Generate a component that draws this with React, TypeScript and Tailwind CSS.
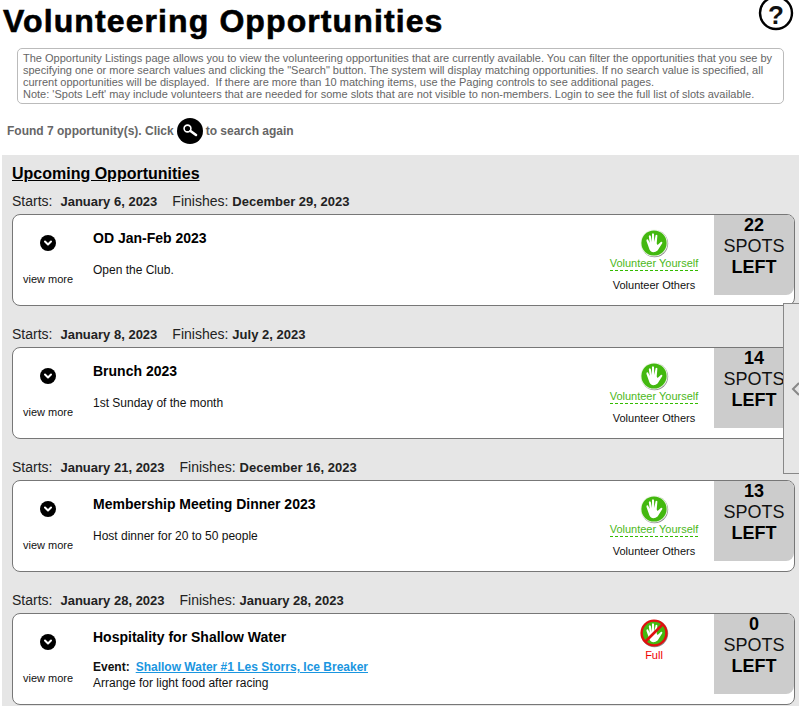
import { ChevronDown } from "lucide-react";

type Opportunity = {
  title: string;
  starts: string;
  finishes: string;
  description: string;
  spots: number;
  event?: string;
};

const OPPORTUNITIES: Opportunity[] = [
  { title: "OD Jan-Feb 2023", starts: "January 6, 2023", finishes: "December 29, 2023", description: "Open the Club.", spots: 22 },
  { title: "Brunch 2023", starts: "January 8, 2023", finishes: "July 2, 2023", description: "1st Sunday of the month", spots: 14 },
  { title: "Membership Meeting Dinner 2023", starts: "January 21, 2023", finishes: "December 16, 2023", description: "Host dinner for 20 to 50 people", spots: 13 },
  {
    title: "Hospitality for Shallow Water",
    starts: "January 28, 2023",
    finishes: "January 28, 2023",
    description: "Arrange for light food after racing",
    spots: 0,
    event: "Shallow Water #1 Les Storrs, Ice Breaker",
  },
];

function HandIcon({ full }: { full?: boolean }) {
  return (
    <svg width="30" height="30" viewBox="0 0 30 30" className="block">
      <circle cx="15.6" cy="15.6" r="13.6" fill="#8f8f8f" />
      <circle cx="15" cy="15" r="13.6" fill={full ? "#e01010" : "#eef7e8"} />
      <circle cx="15" cy="15" r={full ? 11.2 : 12.6} fill="#43b80f" />
      <path
        d="M10.5 21.5 L7.4 12.8 Q7.6 10.8 9 11.6 L10.8 15 L9.8 8.2 Q10.6 6.6 11.8 8 L12.9 14 L13 6 Q13.9 4.6 15 6 L15.3 14 L16.6 7.2 Q17.6 6 18.4 7.4 L17.7 15.4 L18.6 17 L21.8 14 Q23.8 13.4 23.2 15.2 L18.6 22.6 Q16 24.6 13 24 Q11.2 23.4 10.5 21.5 Z"
        fill="#fff"
      />
      {full && <path d="M6.5 23.5 L23.5 6.5" stroke="#e01010" strokeWidth="2.6" />}
    </svg>
  );
}

function SearchIcon() {
  return (
    <span className="flex size-[26px] shrink-0 items-center justify-center rounded-full bg-black">
      <svg width="18" height="18" viewBox="0 0 18 18" fill="none" stroke="#fff">
        <circle cx="6.5" cy="6.5" r="3.4" strokeWidth="1.6" />
        <path d="M9.5 9 L15 13" strokeWidth="2.6" strokeLinecap="round" />
      </svg>
    </span>
  );
}

function OpportunityCard({ item }: { item: Opportunity }) {
  return (
    <section className="mb-[14px]">
      <div className="flex h-[27px] items-center pt-[2px] text-[14px] text-[#222]">
        <span>Starts:</span>
        <b className="ml-[8px] text-[13px] font-bold">{item.starts}</b>
        <span className="ml-[15px]">Finishes:</span>
        <b className="ml-[4px] text-[13px] font-bold">{item.finishes}</b>
      </div>
      <div className="flex h-[92px] overflow-hidden rounded-[8px] border border-[#777] bg-white">
        <div className="flex w-[70px] shrink-0 flex-col items-center pt-[20px]">
          <span className="flex size-[16px] items-center justify-center rounded-full bg-black">
            <ChevronDown size={12} color="#fff" strokeWidth={4} />
          </span>
          <span className="mt-[22px] text-[11px] leading-[13px] text-[#111]">view more</span>
        </div>
        <div className="min-w-0 flex-1 pl-[10px] pt-[14px]">
          <h3 className="text-[14px] leading-[18px] font-bold text-black">{item.title}</h3>
          {item.event ? (
            <div className="mt-[13px] text-[12px] leading-[16px] text-[#111]">
              <div>
                <b className="font-bold">Event:</b>
                <a className="ml-[6px] font-bold text-[#1a96e0] underline">{item.event}</a>
              </div>
              <div>{item.description}</div>
            </div>
          ) : (
            <p className="mt-[15px] text-[12px] leading-[16px] text-[#111]">{item.description}</p>
          )}
        </div>
        {item.spots === 0 ? (
          <div className="flex w-[120px] shrink-0 flex-col items-center pt-[4px]">
            <HandIcon full />
            <span className="mt-[1px] text-[11px] leading-[12px] text-[#f00000]">Full</span>
          </div>
        ) : (
          <div className="flex w-[120px] shrink-0 flex-col items-center pt-[13px]">
            <HandIcon />
            <span className="-mt-[1px] border-b border-dashed border-[#33bb00] text-[11px] leading-[13px] text-[#4cb81a]">
              Volunteer Yourself
            </span>
            <span className="mt-[8px] text-[11px] leading-[13px] text-[#111]">Volunteer Others</span>
          </div>
        )}
        <div className="h-[80px] w-[80px] shrink-0 rounded-br-[8px] bg-[#cccccc] text-center text-[18px] leading-[21px] text-[#111]">
          <div className="font-bold text-black">{item.spots}</div>
          <div>SPOTS</div>
          <div className="font-bold text-black">LEFT</div>
        </div>
      </div>
    </section>
  );
}

export default function App() {
  return (
    <div className="relative h-[706px] w-[799px] overflow-hidden bg-white font-['Liberation_Sans',Arial,sans-serif]">
      <header className="flex h-[48px] items-start justify-between pl-[3px] pr-[5px]">
        <h1 className="text-[32px] leading-[43px] font-bold tracking-[1.1px] text-black [-webkit-text-stroke:0.6px_black]">
          Volunteering Opportunities
        </h1>
        <svg width="36" height="36" viewBox="0 0 36 36" fill="none" className="-mt-[5px]">
          <circle cx="18" cy="18" r="16" stroke="#000" strokeWidth="2.4" />
          <text x="18" y="29" textAnchor="middle" fontSize="26" fontWeight="700" fill="#111" fontFamily="Liberation Sans, Arial, sans-serif">
            ?
          </text>
        </svg>
      </header>

      <div className="mx-[17px] h-[56px] w-[767px] rounded-[5px] border border-[#bbb] px-[5px] py-[3px] text-[11px] leading-[12px] text-[#666]">
        The Opportunity Listings page allows you to view the volunteering opportunities that are currently available. You can filter the opportunities that you see by specifying one or more search values and clicking the "Search" button. The system will display matching opportunities. If no search value is specified, all current opportunities will be displayed.&nbsp; If there are more than 10 matching items, use the Paging controls to see additional pages.
        <br />
        Note: 'Spots Left' may include volunteers that are needed for some slots that are not visible to non-members. Login to see the full list of slots available.
      </div>

      <div className="flex h-[51px] items-center gap-[3px] pl-[7px] pt-[2px] text-[12px] font-bold text-[#666]">
        <span>Found 7 opportunity(s). Click</span>
        <SearchIcon />
        <span>to search again</span>
      </div>

      <main className="ml-[2px] h-[600px] bg-[#e6e6e6] pl-[10px] pr-[4px] pt-[9px]">
        <h2 className="text-[16px] leading-[20px] font-bold text-black underline">Upcoming Opportunities</h2>
        <div className="pt-[3px]">
          {OPPORTUNITIES.map((item) => (
            <OpportunityCard key={item.title} item={item} />
          ))}
        </div>
      </main>

      <div className="absolute left-[783px] top-[303px] flex h-[171px] w-[20px] items-center border border-[#888] bg-[#e6e6e6] pl-[7px]">
        <svg width="9" height="16" viewBox="0 0 9 16" fill="none" stroke="#888" strokeWidth="2">
          <path d="M8 2 L2 8 L8 14" />
        </svg>
      </div>
    </div>
  );
}
